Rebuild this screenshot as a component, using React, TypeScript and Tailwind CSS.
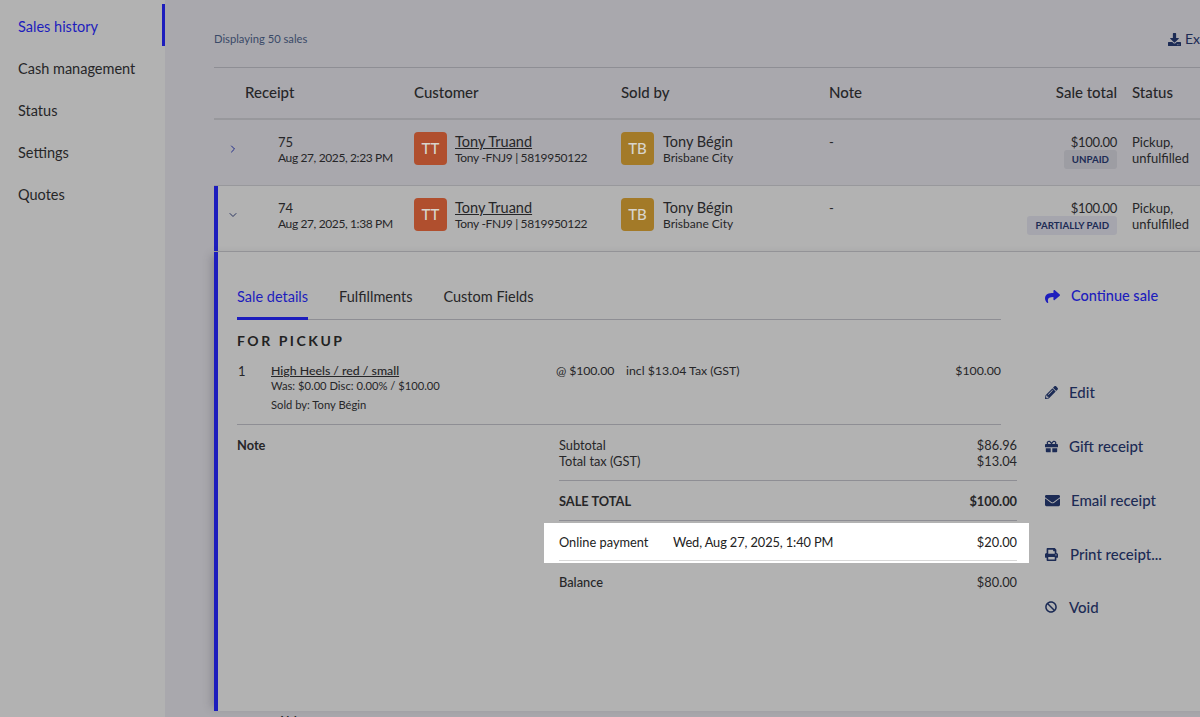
import { ChevronDown, ChevronRight } from "lucide-react";
import { FaBan, FaDownload, FaEnvelope, FaGift, FaPencilAlt, FaPrint, FaShare } from "react-icons/fa";

const gridCols = "grid grid-cols-[64px_136px_207px_208px_140px_148px_109px]";

function Avatar({ text, color }: { text: string; color: string }) {
    return (
        <div className={`flex h-[33px] w-[33px] shrink-0 items-center justify-center rounded-[4px] text-[15px] font-medium text-[#d8d4cc] ${color}`}>
            {text}
        </div>
    );
}

function SaleRow({ number, date, badge, expanded }: { number: string; date: string; badge: string; expanded?: boolean }) {
    return (
        <div className={`${gridCols} h-[66px] border-b border-[#98989c] pt-[12px] text-[#262628] ${expanded ? "bg-[#b2b2b2] shadow-[inset_4px_0_0_#1d1dbd]" : ""}`}>
            <div className="flex h-[33px] items-center pl-[13px]">
                {expanded ? (
                    <ChevronDown size={12} strokeWidth={2} className="text-[#2a3560]" />
                ) : (
                    <ChevronRight size={12} strokeWidth={2} className="text-[#1f2a8a]" />
                )}
            </div>
            <div className="pt-[2px]">
                <div className="text-[13px] leading-[16px]">{number}</div>
                <div className="text-[12px] leading-[16px] tracking-[-0.38px]">{date}</div>
            </div>
            <div className="flex gap-[8px]">
                <Avatar text="TT" color="bg-[#b04f2e]" />
                <div className="pt-[2px]">
                    <div className="text-[14.5px] leading-[16px] underline">Tony Truand</div>
                    <div className="text-[12px] leading-[16px] tracking-[-0.3px]">Tony -FNJ9 | 5819950122</div>
                </div>
            </div>
            <div className="flex gap-[9px]">
                <Avatar text="TB" color="bg-[#a37a28]" />
                <div className="pt-[2px]">
                    <div className="text-[14.5px] leading-[16px]">Tony Bégin</div>
                    <div className="text-[12px] leading-[16px]">Brisbane City</div>
                </div>
            </div>
            <div className="pt-[2px] text-[13px] leading-[16px]">-</div>
            <div className="flex flex-col items-end pt-[2px]">
                <div className="text-[13px] leading-[16px] tracking-[-0.3px]">$100.00</div>
                <div className={`rounded-[3px] px-[8px] text-[9.7px] font-bold leading-[19px] text-[#1c2b55] ${expanded ? "bg-[#a5a5ad]" : "bg-[#9d9da3]"}`}>
                    {badge}
                </div>
            </div>
            <div className="pl-[15px] pt-[2px] text-[13px] leading-[16px]">
                Pickup,
                <br />
                unfulfilled
            </div>
        </div>
    );
}

function Action({ icon, label, blue, size, top }: { icon: React.ReactNode; label: string; blue?: boolean; size: string; top: string }) {
    return (
        <div className={`flex h-[24px] items-center font-medium ${size} ${top} ${blue ? "text-[#1d1dbd]" : "text-[#1c2b55]"}`}>
            {icon}
            <span>{label}</span>
        </div>
    );
}

export default function App() {
    return (
        <div className="flex h-[717px] w-[1200px] overflow-hidden bg-[#a9a8ad] font-['Lato',sans-serif] text-[#262628]">
            {/* Sidebar */}
            <div className="w-[165px] shrink-0 bg-[#b2b2b2] pt-[4px] text-[14.5px]">
                <div className="flex h-[42px] items-center border-r-[3px] border-[#1d1dbd] pl-[18px] pt-[3px] text-[#1d1dbd]">Sales history</div>
                <div className="flex h-[42px] items-center pl-[18px] pt-[3px]">Cash management</div>
                <div className="flex h-[42px] items-center pl-[18px] pt-[3px]">Status</div>
                <div className="flex h-[42px] items-center pl-[18px] pt-[3px]">Settings</div>
                <div className="flex h-[42px] items-center pl-[18px] pt-[3px]">Quotes</div>
            </div>

            {/* Main */}
            <div className="min-w-0 flex-1 pl-[49px]">
                <div className="w-[1012px]">
                    <div className="flex h-[68px] items-start justify-between border-b border-[#8e8e94] pt-[30px]">
                        <div className="text-[11.2px] leading-[18px] text-[#3a4a68]">Displaying 50 sales</div>
                        <div className="flex items-center gap-[4px] text-[14px] leading-[18px] text-[#1c2b55]">
                            <FaDownload size={13} className="-ml-px" />
                            <span>Export</span>
                        </div>
                    </div>

                    <div className={`${gridCols} h-[52px] items-center border-b-2 border-[#98989c] pb-[1px] text-[15px] font-medium`}>
                        <div className="col-span-2 pl-[31px]">Receipt</div>
                        <div>Customer</div>
                        <div>Sold by</div>
                        <div className="col-span-2 flex justify-between">
                            <span>Note</span>
                            <span>Sale total</span>
                        </div>
                        <div className="pl-[15px]">Status</div>
                    </div>

                    <SaleRow number="75" date="Aug 27, 2025, 2:23 PM" badge="UNPAID" />
                    <SaleRow number="74" date="Aug 27, 2025, 1:38 PM" badge="PARTIALLY PAID" expanded />

                    {/* Expanded sale */}
                    <div className="flex h-[459px] bg-[#b2b2b2] pl-[23px] pt-[32px] shadow-[inset_4px_0_0_#1d1dbd,-6px_0_8px_-3px_rgba(60,60,70,0.25)]">
                        <div className="w-[780px] shrink-0">
                            <div className="flex h-[36px] w-[764px] gap-[31px] border-b border-[#8e8e94] text-[14.5px] leading-[25px]">
                                <div className="h-[36px] border-b-[3px] border-[#1d1dbd] text-[#1d1dbd]">Sale details</div>
                                <div>Fulfillments</div>
                                <div>Custom Fields</div>
                            </div>

                            <div className="pt-[13px] text-[14px] font-bold leading-[16px] tracking-[0.18em] text-[#222]">FOR PICKUP</div>

                            <div className="flex h-[76px] w-[764px] border-b border-[#8e8e94] pt-[14px] text-[12.3px] leading-[16px]">
                                <div className="w-[34px] pl-px text-[13px]">1</div>
                                <div className="w-[285px]">
                                    <div className="font-medium underline">High Heels / red / small</div>
                                    <div className="text-[11.2px] leading-[14px]">Was: $0.00 Disc: 0.00% / $100.00</div>
                                    <div className="pt-[5px] text-[11.2px] leading-[14px]">Sold by: Tony Bégin</div>
                                </div>
                                <div className="w-[70px] tracking-[-0.1px]">@ $100.00</div>
                                <div>incl $13.04 Tax (GST)</div>
                                <div className="flex-1 text-right">$100.00</div>
                            </div>

                            <div className="flex text-[12.8px] leading-[16px]">
                                <div className="w-[322px] pt-[12px] font-bold">Note</div>
                                <div className="w-[458px] pt-[12px]">
                                    <div className="flex justify-between"><span>Subtotal</span><span>$86.96</span></div>
                                    <div className="flex justify-between"><span>Total tax (GST)</span><span>$13.04</span></div>
                                    <div className="mt-[11px] flex h-[41px] items-center justify-between border-y border-[#8e8e94] font-bold">
                                        <span>SALE TOTAL</span><span>$100.00</span>
                                    </div>
                                    <div className="-mr-[12px] -ml-[15px] mt-[2px] h-[40px] bg-white pl-[15px] pr-[12px] text-[#222]">
                                        <div className="flex h-[38px] items-center border-b border-[#d8d8d8]">
                                            <span className="w-[114px]">Online payment</span>
                                            <span className="flex-1 tracking-[-0.1px]">Wed, Aug 27, 2025, 1:40 PM</span>
                                            <span>$20.00</span>
                                        </div>
                                    </div>
                                    <div className="flex h-[38px] items-center justify-between font-medium">
                                        <span>Balance</span><span className="font-normal">$80.00</span>
                                    </div>
                                </div>
                            </div>
                        </div>

                        <div className="pl-[28px]">
                            <Action icon={<FaShare size={15} className="mr-[11px]" />} label="Continue sale" blue size="text-[14.5px]" top="" />
                            <Action icon={<FaPencilAlt size={13} className="mr-[11px]" />} label="Edit" size="text-[15px]" top="mt-[72px]" />
                            <Action icon={<FaGift size={13} className="mr-[11px]" />} label="Gift receipt" size="text-[15px]" top="mt-[30px]" />
                            <Action icon={<FaEnvelope size={15} className="mr-[11px]" />} label="Email receipt" size="text-[15px]" top="mt-[30px]" />
                            <Action icon={<FaPrint size={13} className="mr-[12px]" />} label="Print receipt..." size="text-[15px]" top="mt-[30px]" />
                            <Action icon={<FaBan size={12} className="mr-[12px]" />} label="Void" size="text-[15px]" top="mt-[29px]" />
                        </div>
                    </div>

                    <div className="pl-[64px] pt-[1px] text-[12px] leading-[16px]">AM</div>
                </div>
            </div>
        </div>
    );
}
